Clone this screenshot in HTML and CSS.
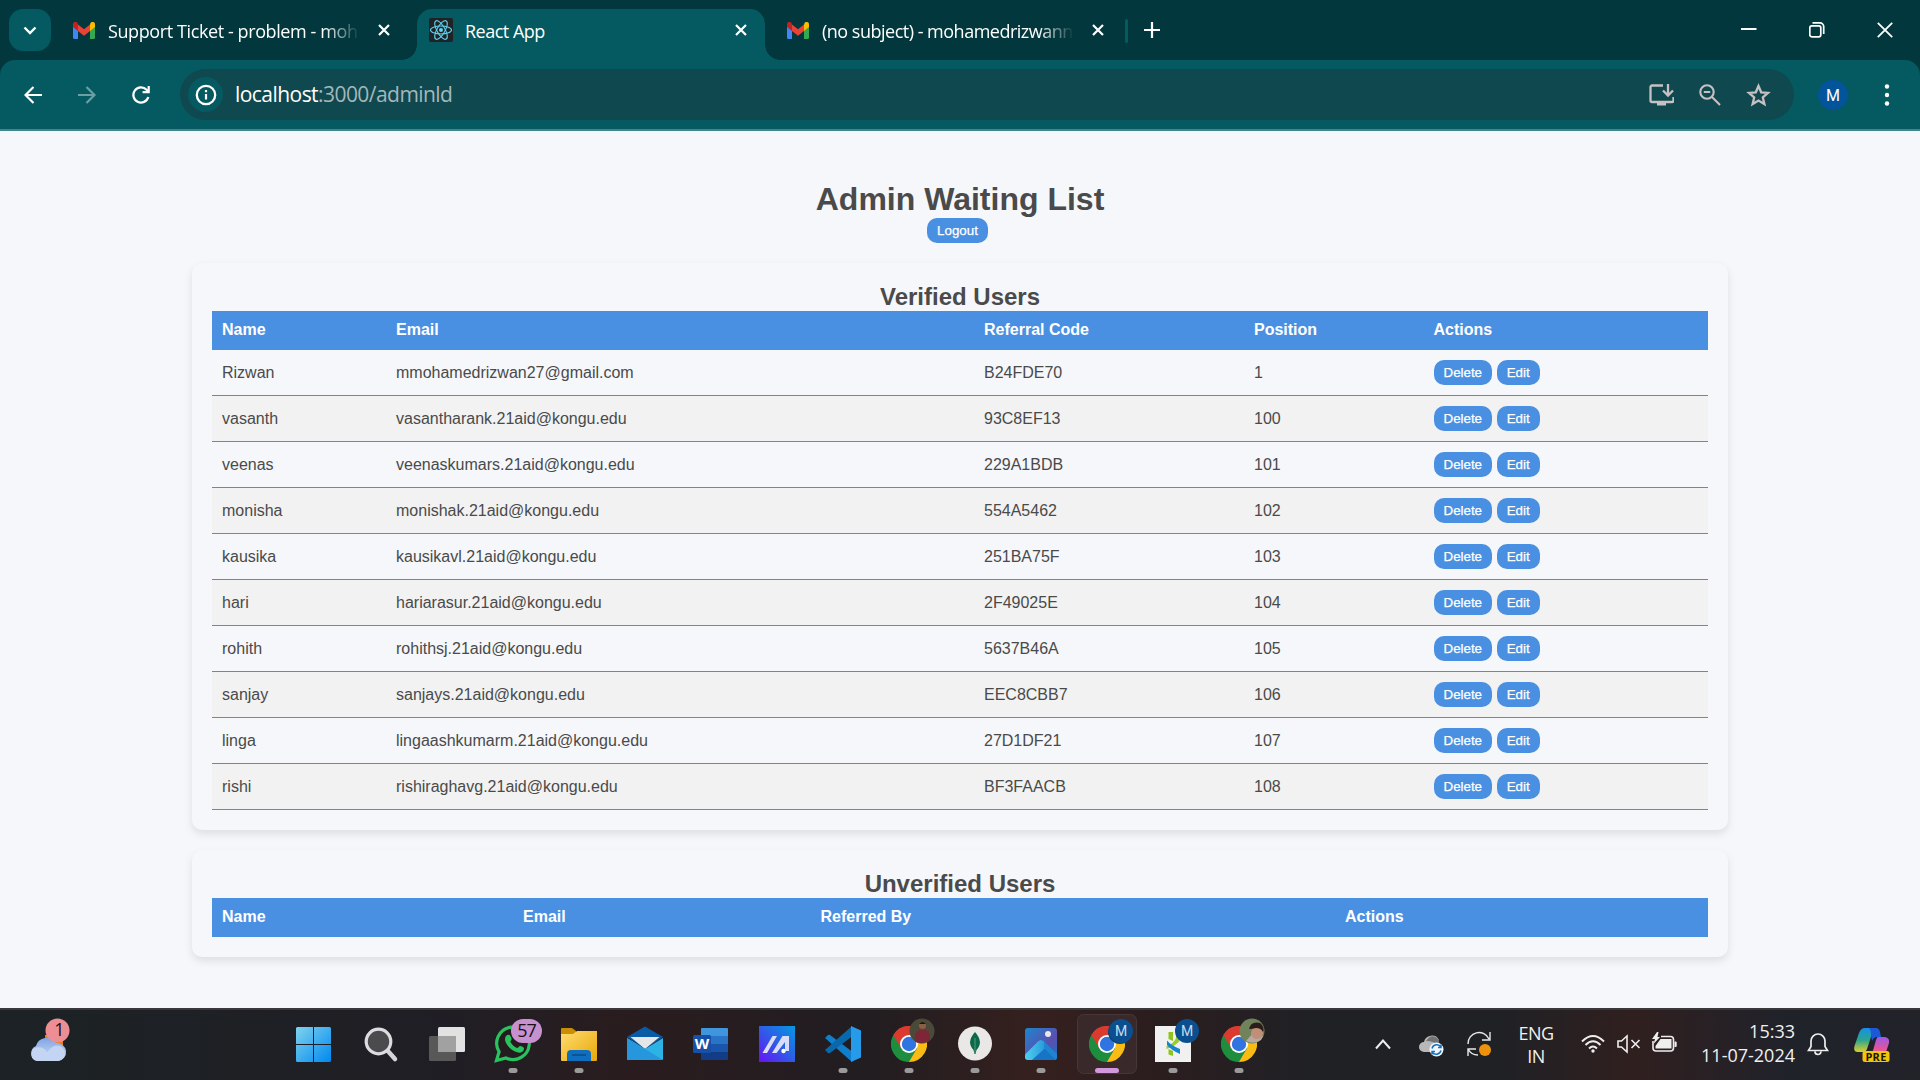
FILE: index.html
```html
<!DOCTYPE html>
<html lang="en">
<head>
<meta charset="utf-8">
<title>React App</title>
<link rel="stylesheet" href="styles.css">
</head>
<body>
<svg class="defs" width="0" height="0">
  <defs>
    <symbol id="gmail" viewBox="0 0 22 17">
      <path d="M0 3v12.500Q0 17 1.500 17H5V7z" fill="#4285f4"/>
      <path d="M22 3v12.500Q22 17 20.500 17H17V7z" fill="#34a853"/>
      <path d="M17 2.500V9l5-4V2.500C22 0 19.500-.8 17.800.6z" fill="#fbbc04"/>
      <path d="M5 9V2.500l6 4.700 6-4.700V9l-6 4.700z" fill="#ea4335"/>
      <path d="M0 2.500V5l5 4V2.500L4.200.6C2.500-.8 0 0 0 2.500z" fill="#c5221f"/>
    </symbol>
    <symbol id="close" viewBox="0 0 12 12"><path d="M1 1l10 10M11 1L1 11" stroke="#fff" stroke-width="2.200" fill="none"/></symbol>
    <symbol id="chrome" viewBox="-18 -18 36 36">
      <path d="M0 0L-15.600-9A18 18 0 0 1 15.600-9z" fill="#dc3a2f"/>
      <path d="M-15.600-9A18 18 0 0 0 1 18L8 4 0 0z" fill="#1e8e3e"/>
      <path d="M15.600-9A18 18 0 0 1 0 18L7.800 4.500 0-9z" fill="#f9bc15"/>
      <path d="M-15.600-9L-7.800 4.500 0 0V-9H15.600A18 18 0 0 0-15.600-9z" fill="#dc3a2f"/>
      <circle r="9" fill="#fff"/><circle r="7.200" fill="#2f74e0"/>
    </symbol>
    <linearGradient id="win" x2="1" y2="1"><stop stop-color="#7fd3ee"/><stop offset="1" stop-color="#0088f0"/></linearGradient>
    <linearGradient id="folder" x2="1" y2="1"><stop stop-color="#ffdc70"/><stop offset="1" stop-color="#e8a808"/></linearGradient>
    <linearGradient id="asus" x1="0" y1="1" x2="1" y2="0"><stop stop-color="#6a10f5"/><stop offset=".5" stop-color="#2f5be8"/><stop offset="1" stop-color="#0598e0"/></linearGradient>
    <linearGradient id="cloud" x2="0" y2="1"><stop stop-color="#7fa4e4"/><stop offset="1" stop-color="#d3e0f3"/></linearGradient>
    <linearGradient id="photo" x2="1" y2="1"><stop stop-color="#1b86d0"/><stop offset=".6" stop-color="#5a4fae"/><stop offset="1" stop-color="#1b72c4"/></linearGradient>
    <linearGradient id="peak" x2="1" y2="0"><stop stop-color="#4fd0f0"/><stop offset="1" stop-color="#2191d8"/></linearGradient>
    <linearGradient id="cop1" x2="0" y2="1"><stop stop-color="#1590ea"/><stop offset=".5" stop-color="#2ba58f"/><stop offset="1" stop-color="#dfcf2c"/></linearGradient>
    <linearGradient id="cop2" x2="0" y2="1"><stop stop-color="#9a5be8"/><stop offset=".5" stop-color="#e0559c"/><stop offset="1" stop-color="#f68a4b"/></linearGradient>
  </defs>
</svg>

<header class="browser">
  <div class="tabstrip">
    <div class="tab-search"><svg width="14" height="9" viewBox="0 0 14 9"><path d="M1.500 1.500L7 7l5.500-5.500" fill="none" stroke="#fff" stroke-width="2.400"/></svg></div>
    <div class="tab tab-first">
      <svg class="gmail-icon"><use href="#gmail"/></svg>
      <span class="tab-title fade">Support Ticket - problem - moh</span>
      <svg class="close-icon"><use href="#close"/></svg>
    </div>
    <div class="tab tab-active">
      <svg class="react-icon" viewBox="0 0 24 24"><rect width="24" height="24" rx="2" fill="#202326"/><g fill="none" stroke="#5fd3f0" stroke-width="1.100" transform="translate(12 12)"><ellipse rx="10.500" ry="4"/><ellipse rx="10.500" ry="4" transform="rotate(60)"/><ellipse rx="10.500" ry="4" transform="rotate(120)"/><circle r="2" fill="#5fd3f0" stroke="none"/></g></svg>
      <span class="tab-title">React App</span>
      <svg class="close-icon"><use href="#close"/></svg>
    </div>
    <div class="tab tab-third">
      <svg class="gmail-icon"><use href="#gmail"/></svg>
      <span class="tab-title fade">(no subject) - mohamedrizwann</span>
      <svg class="close-icon"><use href="#close"/></svg>
    </div>
    <div class="tab-divider"></div>
    <svg class="new-tab" width="16" height="16" viewBox="0 0 16 16"><path d="M8 0v16M0 8h16" stroke="#fff" stroke-width="2.200"/></svg>
    <div class="window-controls">
      <svg width="16" height="16" viewBox="0 0 16 16"><path d="M0 7h15.500" stroke="#fff" stroke-width="2"/></svg>
      <svg width="16" height="16" viewBox="0 0 16 16" fill="none" stroke="#fff" stroke-width="1.700"><rect x=".8" y="3.800" width="11" height="11" rx="2"/><path d="M3.500.9H11a3.700 3.700 0 0 1 3.700 3.700V12"/></svg>
      <svg width="16" height="16" viewBox="0 0 16 16"><path d="M.8.800l14.400 14.400M15.200.8L.8 15.200" stroke="#fff" stroke-width="1.800"/></svg>
    </div>
  </div>
  <div class="toolbar">
    <svg class="nav" viewBox="0 0 18 18"><path d="M18 9H1.500M9.500 1L1.500 9l8 8" stroke="#fff" stroke-width="2.200" fill="none"/></svg>
    <svg class="nav" viewBox="0 0 18 18"><path d="M0 9h16.500M8.500 1l8 8-8 8" stroke="#6aa0a4" stroke-width="2.200" fill="none"/></svg>
    <svg class="nav" viewBox="0 0 18 18"><path d="M16.300 11A7.600 7.600 0 1 1 14.600 3.800L16 5.400" stroke="#fff" stroke-width="2.300" fill="none"/><path d="M17.800 0v7.200h-7.200V5h5V0z" fill="#fff"/></svg>
    <div class="omnibox">
      <div class="site-info"><svg width="22" height="22" viewBox="0 0 22 22"><circle cx="11" cy="11" r="9.200" fill="none" stroke="#fff" stroke-width="2.300"/><path d="M11 10v5.500M11 6v2.200" stroke="#fff" stroke-width="2.200"/></svg></div>
      <span class="url"><b>localhost</b>:3000/adminld</span>
      <div class="omni-actions">
        <svg width="25" height="24" viewBox="0 0 25 24" fill="none" stroke="#c6c1c2" stroke-width="2.300"><path d="M14 2.500H3a1.500 1.500 0 0 0-1.500 1.500v13.500A1.500 1.500 0 0 0 3 19h20a1.500 1.500 0 0 0 1.500-1.500V14M19 1v11M14 7.500l5 5 5-5"/><path d="M8 19h9v3.500H8z" fill="#c6c1c2" stroke="none"/></svg>
        <svg width="22" height="22" viewBox="0 0 22 22" fill="none" stroke="#c6c1c2" stroke-width="2.100"><circle cx="8" cy="8" r="6.700"/><path d="M13 13l8 8M4.800 8h6.400"/></svg>
        <svg width="25" height="24" viewBox="0 0 25 24"><path d="M12.500 3l2.700 6.300 6.800.6-5.200 4.500 1.600 6.700-5.900-3.600-5.900 3.600 1.600-6.700L3 9.900l6.800-.6z" fill="none" stroke="#c6c1c2" stroke-width="2.300"/></svg>
      </div>
    </div>
    <div class="profile">M</div>
    <svg class="menu" width="6" height="24" viewBox="0 0 6 24" fill="#fff"><circle cx="3" cy="3.500" r="2.200"/><circle cx="3" cy="12" r="2.200"/><circle cx="3" cy="20.500" r="2.200"/></svg>
  </div>
</header>

<main class="page">
  <h1>Admin Waiting List</h1>
  <div class="logout-row"><button class="btn">Logout</button></div>
  <section class="card">
    <h2>Verified Users</h2>
    <table class="users">
      <colgroup><col class="v-name"><col class="v-email"><col class="v-code"><col class="v-pos"><col></colgroup>
      <thead><tr><th>Name</th><th>Email</th><th>Referral Code</th><th>Position</th><th>Actions</th></tr></thead>
      <tbody>
        <tr><td>Rizwan</td><td>mmohamedrizwan27@gmail.com</td><td>B24FDE70</td><td>1</td><td><div class="actions"><button class="btn">Delete</button><button class="btn">Edit</button></div></td></tr>
        <tr><td>vasanth</td><td>vasantharank.21aid@kongu.edu</td><td>93C8EF13</td><td>100</td><td><div class="actions"><button class="btn">Delete</button><button class="btn">Edit</button></div></td></tr>
        <tr><td>veenas</td><td>veenaskumars.21aid@kongu.edu</td><td>229A1BDB</td><td>101</td><td><div class="actions"><button class="btn">Delete</button><button class="btn">Edit</button></div></td></tr>
        <tr><td>monisha</td><td>monishak.21aid@kongu.edu</td><td>554A5462</td><td>102</td><td><div class="actions"><button class="btn">Delete</button><button class="btn">Edit</button></div></td></tr>
        <tr><td>kausika</td><td>kausikavl.21aid@kongu.edu</td><td>251BA75F</td><td>103</td><td><div class="actions"><button class="btn">Delete</button><button class="btn">Edit</button></div></td></tr>
        <tr><td>hari</td><td>hariarasur.21aid@kongu.edu</td><td>2F49025E</td><td>104</td><td><div class="actions"><button class="btn">Delete</button><button class="btn">Edit</button></div></td></tr>
        <tr><td>rohith</td><td>rohithsj.21aid@kongu.edu</td><td>5637B46A</td><td>105</td><td><div class="actions"><button class="btn">Delete</button><button class="btn">Edit</button></div></td></tr>
        <tr><td>sanjay</td><td>sanjays.21aid@kongu.edu</td><td>EEC8CBB7</td><td>106</td><td><div class="actions"><button class="btn">Delete</button><button class="btn">Edit</button></div></td></tr>
        <tr><td>linga</td><td>lingaashkumarm.21aid@kongu.edu</td><td>27D1DF21</td><td>107</td><td><div class="actions"><button class="btn">Delete</button><button class="btn">Edit</button></div></td></tr>
        <tr><td>rishi</td><td>rishiraghavg.21aid@kongu.edu</td><td>BF3FAACB</td><td>108</td><td><div class="actions"><button class="btn">Delete</button><button class="btn">Edit</button></div></td></tr>
      </tbody>
    </table>
  </section>
  <section class="card">
    <h2>Unverified Users</h2>
    <table class="users">
      <colgroup><col class="u-name"><col class="u-email"><col class="u-ref"><col></colgroup>
      <thead><tr><th>Name</th><th>Email</th><th>Referred By</th><th>Actions</th></tr></thead>
    </table>
  </section>
</main>

<footer class="taskbar">
  <svg class="weather" width="90" height="70" viewBox="0 0 90 70">
    <path d="M46 27h18v10l-8 8H46z" fill="#ee7a10"/>
    <path d="M38 53a8 8 0 0 1-1-15 11 11 0 0 1 20-3 8.500 8.500 0 0 1 2 18z" fill="url(#cloud)"/>
    <path d="M38 53a7 7 0 0 1-1-13.500q8-1 11 5 6-9 13-6.500a7.800 7.800 0 0 1-3 15z" fill="#c3d5f2"/>
    <circle cx="58.500" cy="22.500" r="12" fill="#ed8e95"/><text x="60" y="28" class="badge-text" text-anchor="middle">1</text>
  </svg>
  <div class="apps">
    <svg class="app" viewBox="0 0 66 72"><path d="M14 20.500q0-1.500 1.500-1.500H31v17H14zM32 19h15.500q1.500 0 1.500 1.500V36H32zM14 37h17v17H15.500q-1.500 0-1.500-1.500zM32 37h17v15.500q0 1.500-1.500 1.500H32z" fill="url(#win)"/></svg>
    <svg class="app" viewBox="0 0 66 72"><path d="M39 42l8 9" stroke="#d3d5d8" stroke-width="4.500" stroke-linecap="round"/><circle cx="30.500" cy="33.500" r="12.300" fill="#4b4b4e" stroke="#dcdde0" stroke-width="3.200"/></svg>
    <svg class="app" viewBox="0 0 66 72"><rect x="24" y="19" width="27" height="25" rx="1.500" fill="#e2e2e2"/><rect x="15" y="28" width="27" height="25" rx="1.500" fill="#636363" opacity=".85"/><path d="M24 28h18v16H24z" fill="#a1a1a1"/></svg>
    <svg class="app" viewBox="0 0 66 72"><path d="M16.500 52.500l2.600-8.700A16.300 16.300 0 1 1 26 50z" fill="#241c1e" stroke="#28c35e" stroke-width="3.200"/><path d="M26 28c3-3 5 0 5.500 2.500.5 1.500-1.500 2.500-1 3.500 1.500 3 4 5 6.500 6 1.500 0 2-2.500 3.500-2 2 .7 4 1.500 3.500 3-1 4-5 4.500-9 2.500-5-2-10-8-10-12 0-1.500.5-3 1-3.500z" fill="#28c35e"/><rect x="31" y="11" width="31" height="24" rx="12" fill="#c791d0"/><text x="46.500" y="29" class="badge-text" text-anchor="middle">57</text><rect x="28.500" y="60" width="9" height="5" rx="2.500" fill="#9b9a9b"/></svg>
    <svg class="app" viewBox="0 0 66 72"><path d="M15 21q0-1 1-1h10l4 3v5H15z" fill="#c98e05"/><path d="M15 26h12l4-3h20v29q0 1-1 1H16q-1 0-1-1z" fill="url(#folder)"/><path d="M21 53v-7q0-4 4-4h16q4 0 4 4v7z" fill="#0f6fbe"/><path d="M26 47h14" stroke="#0a4b85" stroke-width="1.500"/><rect x="28.500" y="60" width="9" height="5" rx="2.500" fill="#9b9a9b"/></svg>
    <svg class="app" viewBox="0 0 66 72"><path d="M15 29l18-10.500L51 29l-18 12z" fill="#0a5ba6"/><path d="M18.500 29h29L33 41z" fill="#e4e6e8"/><path d="M15 30l18 11 18-11v21q0 1-1 1H16q-1 0-1-1z" fill="#2cb2e4"/><path d="M15 30l36 22H16q-1 0-1-1z" fill="#2697dd"/></svg>
    <svg class="app" viewBox="0 0 66 72"><path d="M23 28v-7q0-1 1-1h25q1 0 1 1v7z" fill="#3f96dd"/><path d="M23 28h27v8H23z" fill="#2a74c7"/><path d="M23 36h27v8H23z" fill="#1a55ac"/><path d="M23 44h27v7q0 1-1 1H24q-1 0-1-1z" fill="#123c85"/><rect x="15" y="27" width="18" height="18" rx="1.500" fill="#1650a8"/><text x="24" y="41" class="word-letter" text-anchor="middle">W</text></svg>
    <svg class="app" viewBox="0 0 66 72"><path d="M15 18h36v36H15z" fill="url(#asus)"/><path d="M18.500 45l10-17h4.500L23 45zM28 45l10.500-17H45v15h-4V34l-8.500 11z" fill="#d8def7"/><circle cx="39.500" cy="43" r="2.200" fill="#fff"/></svg>
    <svg class="app" viewBox="0 0 66 72"><path d="M15 30l3-3q1-.6 2 0l24 18-2 9z" fill="#0f7fcc"/><path d="M15 42l3 3q1 .6 2 0l24-18-2-9z" fill="#0968ab"/><path d="M41 18l10 4.500v27L41 54z" fill="#259bea"/><rect x="28.500" y="60" width="9" height="5" rx="2.500" fill="#9b9a9b"/></svg>
    <svg class="app" viewBox="0 0 66 72"><use href="#chrome" x="15" y="18" width="36" height="36"/><circle cx="46" cy="23" r="12.500" fill="#4b4a39"/><path d="M39 34v-7q1-4 5-5h5q4 1 5 5v5q-7 5-15 2z" fill="#7e2638"/><circle cx="46.500" cy="17.500" r="3.500" fill="#8a5f48"/><path d="M43 16q3.500-4 7 0z" fill="#1b1512"/><rect x="28.500" y="60" width="9" height="5" rx="2.500" fill="#9b9a9b"/></svg>
    <svg class="app" viewBox="0 0 66 72"><circle cx="33" cy="35.500" r="17" fill="#e9e8e6"/><path d="M33 24q-9 10-1.500 18l1 4h1l1-4Q42 34 33 24z" fill="#0b6a4b"/><path d="M33 30v16" stroke="#549b78" stroke-width="1"/><rect x="28.500" y="60" width="9" height="5" rx="2.500" fill="#9b9a9b"/></svg>
    <svg class="app" viewBox="0 0 66 72"><rect x="17" y="20" width="32" height="32" rx="3" fill="url(#photo)"/><path d="M22 52l15-15 12 11v1q0 3-3 3z" fill="#1673c6"/><path d="M17.500 46l12.500-12.500q3-3 6 0l4 4L24 52h-4q-3 0-3-3v-1z" fill="url(#peak)"/><path d="M36 33.500l13 12.500v3q0 2-1.500 2.800L36 40z" fill="#1f84d2"/><circle cx="40" cy="26" r="3" fill="#e9e6ec"/><rect x="28.500" y="60" width="9" height="5" rx="2.500" fill="#9b9a9b"/></svg>
    <svg class="app" viewBox="0 0 66 72"><rect x="3.500" y="6.500" width="59" height="59" rx="6" fill="#39292b" stroke="#463638"/><use href="#chrome" x="15" y="18" width="36" height="36"/><circle cx="46" cy="24" r="12" fill="#103f75"/><circle cx="47" cy="23" r="12" fill="#0a5091"/><text x="47" y="28" class="m-letter" text-anchor="middle">M</text><rect x="21" y="60" width="24" height="5" rx="2.500" fill="#d297dc"/></svg>
    <svg class="app" viewBox="0 0 66 72"><path d="M15 18h36v36H15z" fill="#f1f1f1"/><path d="M28.500 24h4.500v9l-4.500-2zM28.500 41l4.500 2v5l-4.500-1.500z" fill="#8fc31f"/><path d="M36 24h3.500v9q-4 5-13 8v-3q8-3 9.500-8z" fill="#9ccb2c"/><path d="M27 32.500q4 5 13 8.500v5q-9-4-13-9z" fill="#1585cf"/><circle cx="47" cy="23" r="12" fill="#0a5091"/><text x="47" y="28" class="m-letter" text-anchor="middle">M</text><rect x="28.500" y="60" width="9" height="5" rx="2.500" fill="#9b9a9b"/></svg>
    <svg class="app" viewBox="0 0 66 72"><use href="#chrome" x="15" y="18" width="36" height="36"/><circle cx="46" cy="23" r="12.500" fill="#71835a"/><path d="M40 33q8 4 15-1l2-4-9-4z" fill="#b7a8a2"/><circle cx="51" cy="25" r="6" fill="#c08f78"/><path d="M43 21q2-8 11-6 5 4 3 9-2-4-7-4-4 1-7 1z" fill="#2a1d1b"/><rect x="28.500" y="60" width="9" height="5" rx="2.500" fill="#9b9a9b"/></svg>
  </div>
  <div class="tray">
    <svg class="chevron" width="16" height="12" viewBox="0 0 16 12"><path d="M1 10.500l7-8 7 8" fill="none" stroke="#eee" stroke-width="2"/></svg>
    <svg class="onedrive" width="26" height="22" viewBox="0 0 26 22"><path d="M5 17a5 5 0 0 1 0-10 8 8 0 0 1 15-2v12z" fill="#b8b8b9"/><path d="M7 6q6-9 13-1v6q-5-5-13-5z" fill="#737374"/><circle cx="17.500" cy="14.500" r="7" fill="#f3f6fa"/><path d="M13 13.500a5 5 0 0 1 9-1.500M22 15.500a5 5 0 0 1-9 1.500M22 9.500v3h-3M13 19.500v-3h3" fill="none" stroke="#1772be" stroke-width="1.500"/></svg>
    <svg class="sync" width="24" height="26" viewBox="0 0 24 26"><path d="M1 13A11 11 0 0 1 22 8M23 1v8h-8M1 25v-7h8M1 18q3 6 10 6" fill="none" stroke="#e8e8e8" stroke-width="1.400"/><circle cx="18" cy="19" r="6" fill="#ee920d"/></svg>
    <div class="lang">ENG<br>IN</div>
    <svg class="wifi" width="24" height="20" viewBox="0 0 24 20" fill="none" stroke="#eee" stroke-width="1.900"><path d="M1 7.500q11-11 22 0M4.500 11q7.500-7.500 15 0M8 14.500q4-4 8 0"/><circle cx="12" cy="17" r="1.700" fill="#eee" stroke="none"/></svg>
    <svg class="volume" width="24" height="20" viewBox="0 0 24 20" fill="none" stroke="#eee" stroke-width="1.600"><path d="M1 7h3.500L10 2v16l-5.500-5H1zM14.500 6l8 8M22.500 6l-8 8"/></svg>
    <svg class="battery" width="25" height="22" viewBox="0 0 25 22"><path d="M9 4.500h9.500a3 3 0 0 1 3 3v8.500a3 3 0 0 1-3 3H4a3 3 0 0 1-3-3V9" fill="none" stroke="#eee" stroke-width="1.600"/><path d="M3.500 14l5-7h11v9.500h-16zM22.500 9.500h1.200q1 0 1 1v3.500q0 1-1 1h-1.200zM5 0L0 7h3l-1.500 5L8 5H5.500l1-5z" fill="#eee"/></svg>
    <div class="clock">15:33<br>11-07-2024</div>
    <svg class="bell" width="22" height="24" viewBox="0 0 22 24"><path d="M1.500 18.500h19l-2.500-4V9a7 7 0 0 0-14 0v5.500zM8 19.500a3 3 0 0 0 6 0" fill="none" stroke="#eee" stroke-width="1.700"/></svg>
    <svg class="copilot" width="38" height="38" viewBox="0 0 38 38"><path d="M11 1h12q-4 1-5 6l-5 15q-1 3-4 3H4q-5 0-3.500-6L5 6q2-5 6-5z" fill="url(#cop1)"/><path d="M15 1h7q3 0 4 4l1 5h-5q-3 1-4 4l-1-6q0-5-2-7z" fill="#1d58d6"/><path d="M24 10h7q5 1 4 6l-4 12q-2 5-6 5H14q3-1 4-6l4-14q1-3 2-3z" fill="url(#cop2)"/><rect x="8.500" y="24" width="27" height="11" rx="2.500" fill="#f3c50b"/><text x="22" y="33.500" class="pre" text-anchor="middle">PRE</text></svg>
  </div>
</footer>
</body>
</html>
```
FILE: styles.css
```css
* { box-sizing: border-box; }
body { margin: 0; width: 1920px; height: 1080px; overflow: hidden; display: flex; flex-direction: column; background: #f5f7fb; font-family: "Liberation Sans", Arial, sans-serif; color: #4a4a4a; }
svg { display: block; flex: none; }
.defs { position: absolute; }

/* browser frame */
.browser { height: 131px; flex: none; background: #02383d; font-family: "Open Sans", "Noto Sans", sans-serif; color: #fff; }
.tabstrip { height: 60px; padding: 9px 27px 0 9px; display: flex; align-items: flex-start; }
.tab-search { width: 42px; height: 42px; border-radius: 14px; background: #045a60; display: flex; align-items: center; justify-content: center; }
.tab { height: 51px; display: flex; align-items: center; padding-bottom: 9px; }
.tab-title { font-size: 18px; line-height: 26px; letter-spacing: -0.5px; white-space: nowrap; flex: 1; min-width: 0; margin: 2px 0 0 13px; }
.tab-active .tab-title { margin-left: 12px; }
.fade { -webkit-mask-image: linear-gradient(90deg, #000 calc(100% - 36px), transparent); mask-image: linear-gradient(90deg, #000 calc(100% - 36px), transparent); }
.tab-first .tab-title { letter-spacing: -0.4px; }
.gmail-icon { width: 22px; height: 17px; }
.react-icon { width: 24px; height: 24px; }
.close-icon { width: 12px; height: 12px; margin-left: 18px; }
.tab-first { width: 317px; margin-left: 22px; }
.tab-active { width: 348px; margin-left: 27px; padding: 0 18px 9px 12px; background: #045a60; border-radius: 15px 15px 0 0; position: relative; }
.tab-active::before, .tab-active::after { content: ""; position: absolute; bottom: 0; width: 15px; height: 15px; }
.tab-active::before { left: -15px; background: radial-gradient(circle at 0 0, transparent 14.5px, #045a60 15px); }
.tab-active::after { right: -15px; background: radial-gradient(circle at 100% 0, transparent 14.5px, #045a60 15px); }
.tab-third { width: 317px; margin-left: 22px; }
.tab-divider { width: 3px; height: 24px; margin: 10px 0 0 21px; border-radius: 2px; background: #045a60; }
.new-tab { margin: 13px 0 0 16px; }
.window-controls { margin: 13px 0 0 auto; display: flex; gap: 52px; }
.toolbar { height: 71px; padding: 9px 30px 9px 24px; border-bottom: 2px solid #41858a; border-radius: 15px 15px 0 0; background: #045a60; display: flex; align-items: center; }
.nav { width: 18px; height: 18px; margin-right: 36px; }
.nav + .nav + .nav { margin-right: 30px; }
.omnibox { width: 1614px; height: 51px; border-radius: 26px; background: #10484f; display: flex; align-items: center; padding: 0 23px 0 8px; }
.site-info { width: 35px; height: 35px; border-radius: 50%; background: #045a60; display: flex; align-items: center; justify-content: center; }
.url { margin: 0 0 1px 12px; font-size: 21px; letter-spacing: -0.55px; color: #a3b8bb; }
.url b { font-weight: 400; color: #fff; }
.omni-actions { margin-left: auto; display: flex; align-items: center; gap: 25px; }
.profile { width: 30px; height: 30px; margin-left: 24px; border-radius: 50%; background: #04549c; font: 16px/31px Roboto, sans-serif; text-align: center; }
.menu { margin-left: auto; }

/* page */
.page { flex: 1; padding: 49px 192px 0; }
h1 { margin: 0; font-size: 32px; line-height: 38px; text-align: center; }
.logout-row { padding-right: 5px; display: flex; justify-content: center; }
.btn { margin: 0; border: 0; padding: 5px 10px; height: 25px; border-radius: 10px; background: #4a90e2; color: #fff; font: 13.333px/15px "Liberation Sans", Arial, sans-serif; -webkit-text-stroke: .25px #fff; }
.card { margin-top: 20px; padding: 20px; border-radius: 10px; box-shadow: 0 4px 8px rgba(0, 0, 0, .1); }
h2 { margin: 0; font-size: 24px; line-height: 28px; text-align: center; }
.users { width: 100%; border-collapse: separate; border-spacing: 0; table-layout: fixed; font-size: 16px; line-height: 18px; }
.users th { height: 39px; padding: 10px 10px 11px; text-align: left; color: #fff; background: #4a90e2; }
.users td { height: 46px; padding: 10px; border-bottom: 1px solid #4a90e2; }
.users tbody tr:nth-child(even) { background: #f2f2f2; }
.actions { display: flex; gap: 4.6px; }
.v-name { width: 174px; } .v-email { width: 588px; } .v-code { width: 270px; } .v-pos { width: 179.500px; }
.u-name { width: 301px; } .u-email { width: 297.500px; } .u-ref { width: 524.500px; }

/* taskbar */
.taskbar { height: 72px; flex: none; display: flex; border-top: 2px solid #3a383b; background: linear-gradient(90deg, #1c2225, #201e24 24%, #2a1c1e 33%, #211d21 45%, #35201e 54%, #2b1d1e 60%, #202125 68%, #1f2125 78%, #301f1f 85%, #20222a 93%, #222329); color: #f0f0f0; font-family: "Open Sans", "Noto Sans", sans-serif; }
.weather { margin: -2px 193px 0 -1px; }
.apps { display: flex; margin-top: -2px; }
.app { width: 66px; height: 72px; }
.badge-text { font: 18px "Open Sans", sans-serif; letter-spacing: -1px; fill: #1a1015; }
.word-letter { font: bold 15px "Open Sans", sans-serif; fill: #fff; }
.m-letter { font: 14px Roboto, sans-serif; fill: #c9dbea; }
.pre { font: bold 11px "Open Sans", sans-serif; letter-spacing: .3px; fill: #1d1803; }
.tray { display: flex; align-items: flex-start; margin-top: -2px; font-size: 18px; line-height: 23px; letter-spacing: -0.6px; }
.chevron { margin: 30px 0 0 103px; }
.onedrive { margin: 27px 0 0 28px; }
.sync { margin: 23px 0 0 22px; }
.lang { width: 46px; margin: 14px 0 0 22px; text-align: center; }
.wifi { margin: 26px 0 0 22px; }
.volume { margin: 26px 0 0 12px; }
.battery { margin: 24px 0 0 11px; }
.clock { width: 101px; margin: 11px 0 0 17px; text-align: right; line-height: 24px; letter-spacing: 0; }
.bell { margin: 24px 0 0 12px; }
.copilot { margin: 19px 0 0 25px; }
```
